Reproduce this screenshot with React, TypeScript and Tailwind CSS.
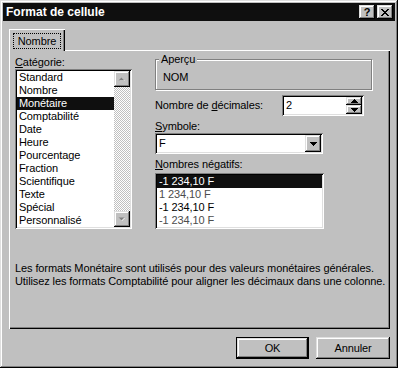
import React from "react";

const raised =
  "bg-[#c0c0c0] shadow-[inset_-1px_-1px_#000,inset_1px_1px_#dfdfdf,inset_-2px_-2px_#808080,inset_2px_2px_#fff]";
const sunken =
  "p-[2px] bg-white shadow-[inset_1px_1px_#808080,inset_-1px_-1px_#fff,inset_2px_2px_#000,inset_-2px_-2px_#dfdfdf]";

function Arrow({ dir, disabled }: { dir: "up" | "down"; disabled?: boolean }) {
  const d = dir === "up" ? "M3 0 L6 3 L0 3 Z" : "M0 0 L6 0 L3 3 Z";
  if (disabled) {
    return (
      <svg width="8" height="5" viewBox="0 0 8 5">
        <path d={dir === "up" ? "M4 1 L7 4 L1 4 Z" : "M1 1 L7 1 L4 4 Z"} fill="#fff" />
        <path d={dir === "up" ? "M3.5 0.5 L6.5 3.5 L0.5 3.5 Z" : "M0.5 0.5 L6.5 0.5 L3.5 3.5 Z"} fill="#808080" />
      </svg>
    );
  }
  return (
    <svg width="7" height="4" viewBox="0 0 6 3" shapeRendering="crispEdges">
      <path d={d} fill="#000" />
    </svg>
  );
}

function ListItem({ text, selected, gray }: { text: string; selected?: boolean; gray?: boolean }) {
  return (
    <div
      className={
        "h-[13px] leading-[13px] px-[2px] whitespace-nowrap " +
        (selected ? "bg-[#0f0f0f] text-white" : gray ? "text-[#4c4c4c]" : "text-black")
      }
    >
      {text}
    </div>
  );
}

export default function App() {
  const categories = [
    "Standard",
    "Nombre",
    "Monétaire",
    "Comptabilité",
    "Date",
    "Heure",
    "Pourcentage",
    "Fraction",
    "Scientifique",
    "Texte",
    "Spécial",
    "Personnalisé",
  ];
  return (
    <div className="w-[398px] h-[368px] bg-[#c0c0c0] p-[3px] flex flex-col text-[11px] leading-[13px] tracking-[-0.1px] text-black font-['Liberation_Sans',Arial,sans-serif] shadow-[inset_-1px_-1px_#000,inset_1px_1px_#dfdfdf,inset_-2px_-2px_#808080,inset_2px_2px_#fff]">
      {/* Title bar */}
      <div className="h-[18px] bg-[#0f0f0f] flex items-center justify-between pl-[3px] pr-[2px]">
        <span className="text-white font-bold text-[12px] leading-[18px] tracking-normal">Format de cellule</span>
        <div className="flex gap-[2px]">
          <div className={"w-[16px] h-[14px] flex items-center justify-center font-bold text-[11px] leading-[14px] " + raised}>
            ?
          </div>
          <div className={"w-[16px] h-[14px] flex items-center justify-center " + raised}>
            <svg width="8" height="7" viewBox="0 0 8 7" shapeRendering="crispEdges">
              <path
                d="M0 0h2v1h-2zM6 0h2v1h-2zM1 1h2v1h-2zM5 1h2v1h-2zM2 2h4v1h-4zM3 3h2v1h-2zM2 4h4v1h-4zM1 5h2v1h-2zM5 5h2v1h-2zM0 6h2v1h-2zM6 6h2v1h-2z"
                fill="#000"
              />
            </svg>
          </div>
        </div>
      </div>

      {/* Tab control */}
      <div className="mt-[8px] ml-[6px] w-[381px] flex flex-col">
        <div className="flex">
          <div className="relative z-10 h-[22px] -mb-[1px] w-[56px] bg-[#c0c0c0] pt-[4px] pl-[4px] shadow-[inset_1px_1px_#fff,inset_-1px_0_#000,inset_-2px_0_#808080]">
            <div className="w-[48px] h-[16px] border border-dotted border-black flex items-center justify-center leading-[13px]">
              Nombre
            </div>
          </div>
        </div>
        <div className="h-[279px] bg-[#c0c0c0] pl-[6px] pt-[5px] flex flex-col shadow-[inset_1px_1px_#fff,inset_-1px_-1px_#000,inset_-2px_-2px_#808080]">
          <div className="flex gap-[23px]">
            {/* Left column */}
            <div className="w-[117px] flex flex-col">
              <div className="h-[14px] leading-[14px]">
                <span className="underline">C</span>atégorie:
              </div>
              <div className={"h-[160px] flex " + sunken}>
                <div className="flex-1 flex flex-col">
                  {categories.map((c) => (
                    <ListItem key={c} text={c} selected={c === "Monétaire"} />
                  ))}
                </div>
                <div className="w-[16px] flex flex-col">
                  <div className={"h-[16px] flex items-center justify-center " + raised}>
                    <Arrow dir="up" disabled />
                  </div>
                  <div className="flex-1 bg-[repeating-conic-gradient(#c0c0c0_0_25%,#fff_0_50%)] bg-[length:2px_2px]" />
                  <div className={"h-[16px] flex items-center justify-center " + raised}>
                    <Arrow dir="down" disabled />
                  </div>
                </div>
              </div>
            </div>

            {/* Right column */}
            <div className="flex flex-col">
              <div className="relative mt-[4px] w-[217px] h-[31px] border border-[#808080] shadow-[1px_1px_#fff,inset_1px_1px_#fff] pl-[7px] pt-[11px]">
                <span className="absolute -top-[7px] left-[3px] px-[2px] bg-[#c0c0c0] leading-[13px]">Aperçu</span>
                <div className="leading-[13px]">NOM</div>
              </div>

              <div className="mt-[5px] flex items-center h-[21px]">
                <div className="w-[127px]">
                  Nombre de <span className="underline">d</span>écimales:
                </div>
                <div className={"w-[82px] h-[21px] flex " + sunken}>
                  <div className="flex-1 flex items-center pl-[2px]">2</div>
                  <div className="w-[16px] flex flex-col">
                    <div className={"h-[8px] flex items-center justify-center " + raised}>
                      <Arrow dir="up" />
                    </div>
                    <div className={"h-[9px] flex items-center justify-center " + raised}>
                      <Arrow dir="down" />
                    </div>
                  </div>
                </div>
              </div>

              <div className="mt-[4px] leading-[13px]">
                <span className="underline">S</span>ymbole:
              </div>
              <div className={"w-[168px] h-[21px] flex " + sunken}>
                <div className="flex-1 flex items-center pl-[2px]">F</div>
                <div className={"w-[16px] flex items-center justify-center " + raised}>
                  <svg width="7" height="4" viewBox="0 0 7 4" shapeRendering="crispEdges">
                    <path d="M0 0h7v1h-7zM1 1h5v1h-5zM2 2h3v1h-3zM3 3h1v1h-1z" fill="#000" />
                  </svg>
                </div>
              </div>

              <div className="mt-[4px] leading-[13px]">
                <span className="underline">N</span>ombres négatifs:
              </div>
              <div className={"mt-[2px] w-[169px] h-[56px] flex flex-col " + sunken}>
                <ListItem text="-1 234,10 F" selected />
                <ListItem text="1 234,10 F" gray />
                <ListItem text="-1 234,10 F" />
                <ListItem text="-1 234,10 F" gray />
              </div>
            </div>
          </div>

          <div className="mt-[33px] leading-[13px] whitespace-nowrap">
            <div>Les formats Monétaire sont utilisés pour des valeurs monétaires générales.</div>
            <div>Utilisez les formats Comptabilité pour aligner les décimaux dans une colonne.</div>
          </div>
        </div>
      </div>

      {/* Buttons */}
      <div className="mt-[8px] ml-[6px] w-[381px] flex justify-end gap-[7px]">
        <div className="w-[73px] h-[22px] border border-black">
          <div className={"w-full h-full flex items-center justify-center " + raised}>OK</div>
        </div>
        <div className={"w-[74px] h-[22px] flex items-center justify-center " + raised}>Annuler</div>
      </div>
    </div>
  );
}
